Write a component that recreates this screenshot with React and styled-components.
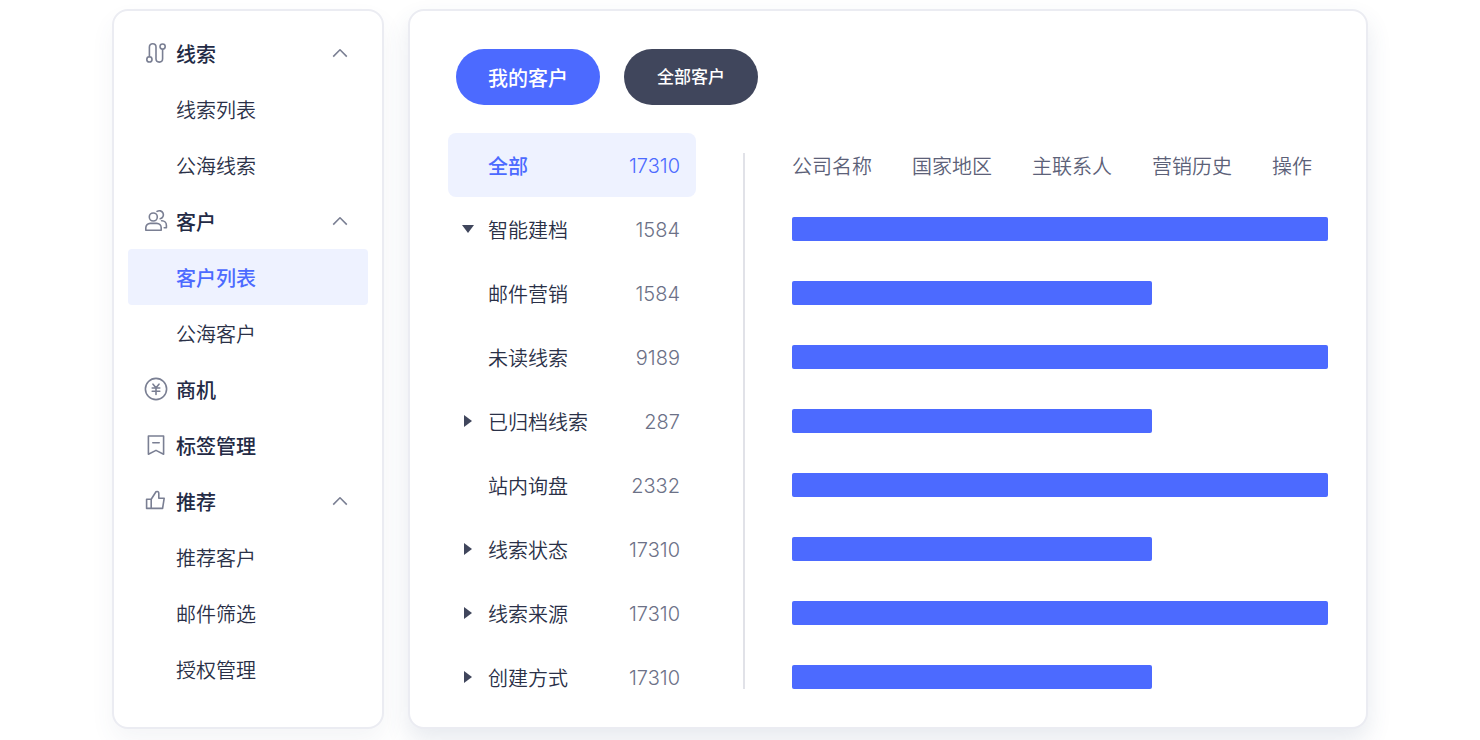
import React from 'react'
import styled, { createGlobalStyle, css } from "styled-components";

const GlobalStyle = createGlobalStyle`
    * {
        box-sizing: border-box;
    }
    body {
        margin: 0;
        background: #fff;
        color: #2a3047;
        font-family: Inter, "Noto Sans CJK SC", sans-serif;
        font-size: 20px;
        line-height: 28px;
    }
    button {
        font: inherit;
        color: inherit;
        border: none;
        background: none;
        cursor: pointer;
    }
`;

const Page = styled.div`
    display: flex;
    gap: 24px;
    max-width: 1304px;
    margin: 0 auto;
    padding: 9px 24px 11px;
`;

const card = css`
    background: #fff;
    border: 2px solid #ebecf2;
    border-radius: 16px;
`;

const Sidebar = styled.nav`
    ${card}
    flex: 0 0 272px;
    padding: 14px 14px 30px;
    box-shadow: 0 12px 24px rgba(60, 80, 120, 0.06);
`;

const Main = styled.main`
    ${card}
    flex: 1;
    min-width: 0;
    padding: 38px 38px 18px;
    box-shadow: 0 12px 24px rgba(60, 80, 120, 0.12);
`;

const MenuList = styled.ul`
    list-style: none;
    margin: 0;
    padding: 0;
`;

const menuRow = css`
    display: flex;
    align-items: center;
    width: 100%;
    height: 56px;
    border-radius: 4px;
    text-decoration: none;
`;

const GroupButton = styled.button`
    ${menuRow}
    gap: 8px;
    padding: 0 16px;
    font-weight: 500;
    color: #232a45;
`;

const GroupTitle = styled.span`
    flex: 1;
    padding-top: 4px;
    text-align: left;
`;

const MenuLink = styled.a`
    ${menuRow}
    padding: 4px 16px 0 48px;
    color: ${(p) => (p.$active ? "#4c6aff" : "#2a3047")};
    background: ${(p) => (p.$active ? "#eef2ff" : "transparent")};
    font-weight: ${(p) => (p.$active ? 500 : 350)};
`;

const Icon = styled.svg`
    flex: none;
    width: 24px;
    height: 24px;
    fill: none;
    stroke: #7a7f93;
    stroke-width: 1.6;
    stroke-linecap: ${(p) => (p.$square ? "butt" : "round")};
    stroke-linejoin: round;
`;

const Tabs = styled.div`
    display: flex;
    gap: 24px;
    padding: 0 8px;
    margin-bottom: 28px;
`;

const Tab = styled.button`
    height: 56px;
    padding: ${(p) => (p.$primary ? "4px 32px 0" : "0 33px")};
    border-radius: 28px;
    background: ${(p) => (p.$primary ? "#4c6aff" : "#40465c")};
    color: #fff;
    font-size: ${(p) => (p.$primary ? 20 : 17)}px;
    font-weight: 500;
`;

const Content = styled.div`
    display: flex;
    gap: 47px;
`;

const FilterList = styled.ul`
    flex: 0 0 248px;
    list-style: none;
    margin: 0;
    padding: 0;
`;

const Filter = styled.button`
    display: flex;
    align-items: center;
    gap: 8px;
    width: 100%;
    height: 64px;
    padding: 0 16px 0 8px;
    border-radius: 8px;
    color: ${(p) => (p.$active ? "#4c6aff" : "#2a3047")};
    background: ${(p) => (p.$active ? "#eef2ff" : "transparent")};
    font-weight: ${(p) => (p.$active ? 500 : 350)};
`;

const FilterName = styled.span`
    flex: 1;
    padding-top: 4px;
    text-align: left;
`;

const Count = styled.span`
    padding-top: 2px;
    color: ${(p) => (p.$active ? "#4c6aff" : "#6c7187")};
    font-weight: 300;
`;

const Arrow = styled.svg`
    flex: none;
    width: 24px;
    height: 24px;
    fill: #40465c;
`;

const Divider = styled.div`
    flex: 0 0 2px;
    margin: 20px 0;
    background: #e1e2e8;
`;

const Table = styled.table`
    flex: 1;
    table-layout: fixed;
    border-collapse: collapse;
`;

const HeadCell = styled.th`
    width: ${(p) => (p.$last ? "auto" : "120px")};
    height: 64px;
    padding: 4px 0 0;
    text-align: left;
    font-weight: 350;
    color: #5c6178;
    white-space: nowrap;
`;

const BarCell = styled.td`
    height: 64px;
    padding: 0;
`;

const Bar = styled.div`
    height: 24px;
    border-radius: 2px;
    background: #4c6aff;
`;

const icons = {
  route: (
    <>
      <circle cx="5.4" cy="18.4" r="2.6" />
      <circle cx="18.6" cy="5.6" r="2.6" />
      <path d="M5.4 15.8V6a3.3 3.3 0 0 1 6.6 0v11.8a3.3 3.3 0 0 0 6.6 0V8.2" />
    </>
  ),
  users: (
    <>
      <circle cx="9.3" cy="8" r="4" />
      <path d="M1.8 21.2v-2.4a4.4 4.4 0 0 1 4.4-4.4h6.6a4.4 4.4 0 0 1 4.4 4.4v2.4z" />
      <path d="M13 2.4a4.1 4.1 0 1 1 3.2 7.4M17.6 11.8h.4a4.4 4.4 0 0 1 4.4 4.4v2.6h-2.2" />
    </>
  ),
  yen: (
    <>
      <circle cx="12" cy="12" r="10.6" />
      <path d="M9 7.2l3 3.6 3-3.6M12 10.8v6.6M8.2 11h7.6M8.2 14.2h7.6" />
    </>
  ),
  bookmark: (
    <>
      <path d="M4.4 3h15.2v18.2L12 17.4l-7.6 3.8z" />
      <path d="M8.8 9.8h6.4" />
    </>
  ),
  thumb: (
    <path d="M7.2 10.2H2.6v9.2h4.6zM7.2 10.2l4.8-7.4c1.6-.7 2.9 0 2.8 1.6v4.8h5.4l-1.6 10.2H7.2" />
  ),
};

const menu = [
  { title: "线索", icon: "route", items: ["线索列表", "公海线索"] },
  { title: "客户", icon: "users", items: ["客户列表", "公海客户"] },
  { title: "商机", icon: "yen" },
  { title: "标签管理", icon: "bookmark" },
  { title: "推荐", icon: "thumb", items: ["推荐客户", "邮件筛选", "授权管理"] },
];

const filters = [
  { name: "全部", count: 17310, active: true },
  { name: "智能建档", count: 1584, arrow: "down" },
  { name: "邮件营销", count: 1584 },
  { name: "未读线索", count: 9189 },
  { name: "已归档线索", count: 287, arrow: "right" },
  { name: "站内询盘", count: 2332 },
  { name: "线索状态", count: 17310, arrow: "right" },
  { name: "线索来源", count: 17310, arrow: "right" },
  { name: "创建方式", count: 17310, arrow: "right" },
];

const columns = ["公司名称", "国家地区", "主联系人", "营销历史", "操作"];
const bars = [100, 67.2, 100, 67.2, 100, 67.2, 100, 67.2];

const arrows = {
  down: "M6 8h12l-6 8z",
  right: "M8 6l8 6-8 6z",
};

const App = () => {
  return (
    <>
      <GlobalStyle />
      <Page>
        <Sidebar>
          <MenuList>
            {menu.map((group) => (
              <li key={group.title}>
                <GroupButton type="button">
                  <Icon viewBox="0 0 24 24" aria-hidden="true">{icons[group.icon]}</Icon>
                  <GroupTitle>{group.title}</GroupTitle>
                  {group.items && (
                    <Icon $square viewBox="0 0 24 24" aria-hidden="true">
                      <path d="M5.2 15.6L12 8.8l6.8 6.8" />
                    </Icon>
                  )}
                </GroupButton>
                {group.items && (
                  <MenuList>
                    {group.items.map((item) => (
                      <li key={item}>
                        <MenuLink href="#" $active={item === "客户列表"}>{item}</MenuLink>
                      </li>
                    ))}
                  </MenuList>
                )}
              </li>
            ))}
          </MenuList>
        </Sidebar>
        <Main>
          <Tabs>
            <Tab type="button" $primary>我的客户</Tab>
            <Tab type="button">全部客户</Tab>
          </Tabs>
          <Content>
            <FilterList>
              {filters.map((f) => (
                <li key={f.name}>
                  <Filter type="button" $active={f.active}>
                    <Arrow viewBox="0 0 24 24" aria-hidden="true">
                      {f.arrow && <path d={arrows[f.arrow]} />}
                    </Arrow>
                    <FilterName>{f.name}</FilterName>
                    <Count $active={f.active}>{f.count}</Count>
                  </Filter>
                </li>
              ))}
            </FilterList>
            <Divider />
            <Table>
              <thead>
                <tr>
                  {columns.map((c, i) => (
                    <HeadCell key={c} scope="col" $last={i === columns.length - 1}>{c}</HeadCell>
                  ))}
                </tr>
              </thead>
              <tbody>
                {bars.map((width, i) => (
                  <tr key={i}>
                    <BarCell colSpan={columns.length}>
                      <Bar style={{ width: `${width}%` }} />
                    </BarCell>
                  </tr>
                ))}
              </tbody>
            </Table>
          </Content>
        </Main>
      </Page>
    </>
  )
}

export default App
